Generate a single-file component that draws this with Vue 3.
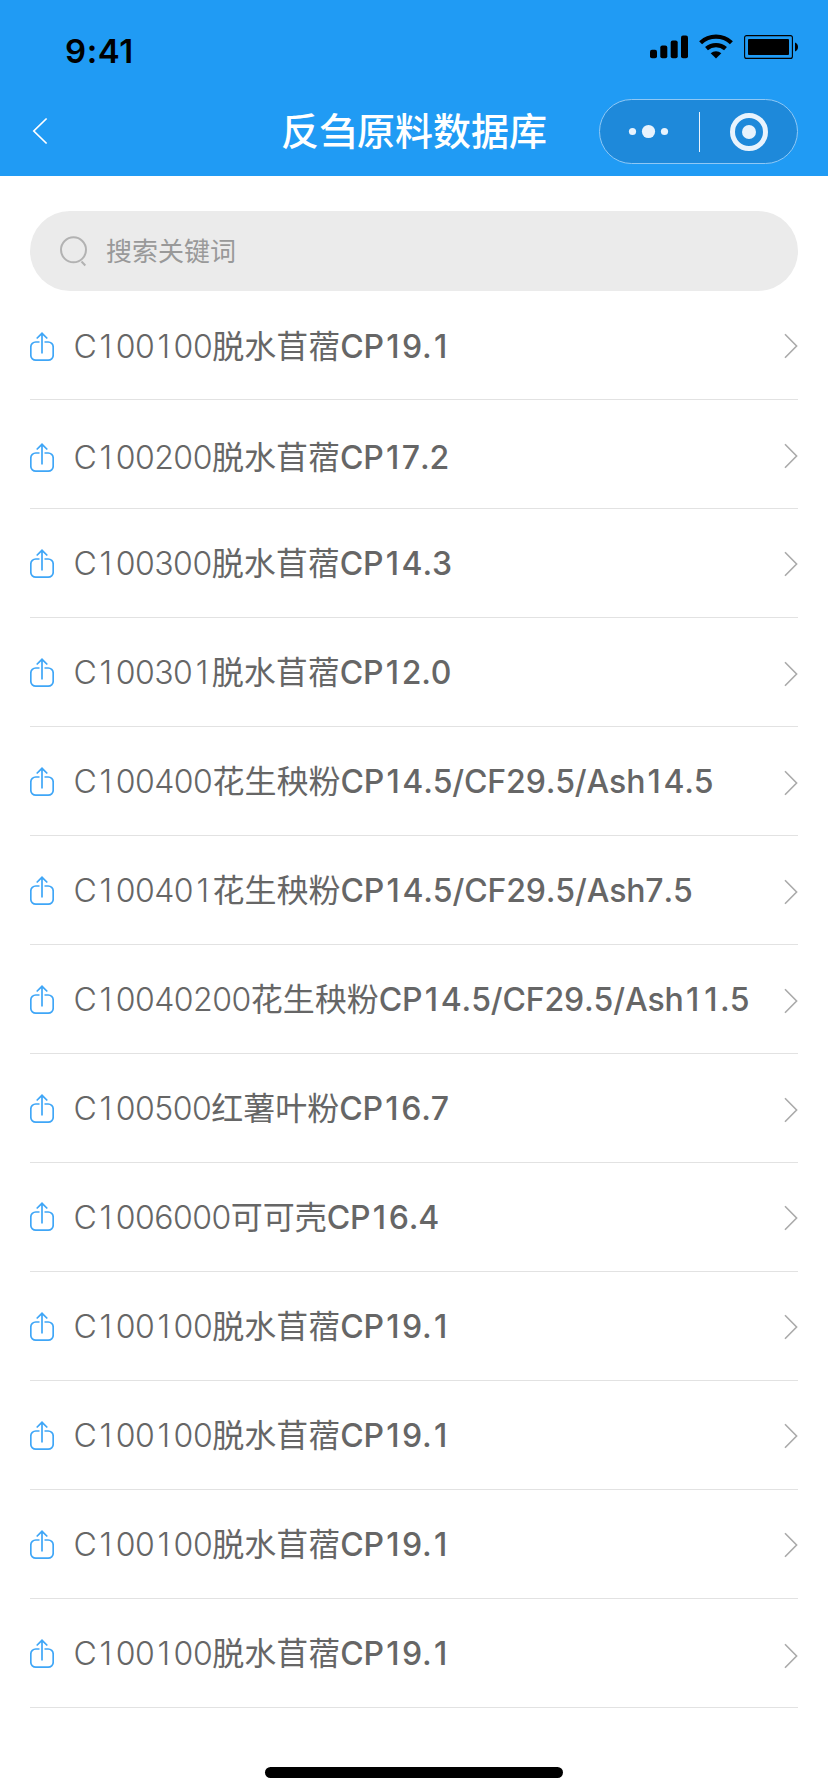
<script setup>
const rows = [
  ['C100100', '脱水苜蓿', 'CP19.1'],
  ['C100200', '脱水苜蓿', 'CP17.2'],
  ['C100300', '脱水苜蓿', 'CP14.3'],
  ['C100301', '脱水苜蓿', 'CP12.0'],
  ['C100400', '花生秧粉', 'CP14.5/CF29.5/Ash14.5'],
  ['C100401', '花生秧粉', 'CP14.5/CF29.5/Ash7.5'],
  ['C10040200', '花生秧粉', 'CP14.5/CF29.5/Ash11.5'],
  ['C100500', '红薯叶粉', 'CP16.7'],
  ['C1006000', '可可壳', 'CP16.4'],
  ['C100100', '脱水苜蓿', 'CP19.1'],
  ['C100100', '脱水苜蓿', 'CP19.1'],
  ['C100100', '脱水苜蓿', 'CP19.1'],
  ['C100100', '脱水苜蓿', 'CP19.1'],
]

// The narrow "1" is padded to the width of the other digits.
const parts = (text) => text.split(/(1)/).filter(Boolean)
</script>

<template>
  <div class="screen">
    <header class="header">
      <div class="status">
        <span class="time">9:41</span>
        <svg class="signals" width="150" height="26" viewBox="0 0 150 26">
          <rect x="0" y="15.8" width="7" height="8.5" rx="2" />
          <rect x="10.3" y="11.6" width="7" height="12.7" rx="2" />
          <rect x="20.7" y="6.6" width="7" height="17.7" rx="2" />
          <rect x="31" y="1.6" width="7" height="22.7" rx="2" />
          <g fill="none" stroke="#000" stroke-width="4.3">
            <path d="M50.6 8.7a22.6 22.6 0 0 1 30.8 0" />
            <path d="M56.5 14.7a14.4 14.4 0 0 1 19 0" />
          </g>
          <path d="M60.7 19.2a8.4 8.4 0 0 1 10.6 0L66 24.4z" />
          <rect x="94.6" y="1.6" width="47.8" height="22.8" rx="2" fill="none" stroke="#000" stroke-width="1.1" />
          <rect x="98" y="5" width="41" height="16" rx="1" />
          <path d="M145 8.5c4 1.5 4 7.5 0 9z" />
        </svg>
      </div>
      <div class="nav">
        <svg class="back" width="16" height="28" viewBox="0 0 16 28">
          <path d="M14.6 1.5L1.8 14l12.8 12.5" fill="none" stroke="#fff" stroke-width="1.7" />
        </svg>
        <h1 class="title">反刍原料数据库</h1>
        <div class="capsule">
          <svg width="199" height="65" viewBox="0 0 199 65">
            <rect x=".5" y=".5" width="198" height="64" rx="32" fill="#1e89da" stroke="#8fc8f5" />
            <g fill="#e8f3fd">
              <circle cx="33.5" cy="32.5" r="3.6" />
              <circle cx="49.5" cy="32.5" r="6.6" />
              <circle cx="65.5" cy="32.5" r="3.6" />
              <rect x="100" y="13" width="1" height="40" />
              <circle cx="150" cy="33" r="7" />
            </g>
            <circle cx="150" cy="33" r="16.5" fill="none" stroke="#e8f3fd" stroke-width="5" />
          </svg>
        </div>
      </div>
    </header>
    <div class="search">
      <svg width="28" height="32" viewBox="0 0 28 32" fill="none" stroke="#b2b2b2" stroke-width="2">
        <circle cx="13.5" cy="14.8" r="12.5" />
        <path d="M21.5 26.5l3.8 4" />
      </svg>
      <span>搜索关键词</span>
    </div>
    <ul class="list">
      <li v-for="(r, i) in rows" :key="i" class="row">
        <svg class="share" width="24" height="30" viewBox="0 0 24 30" fill="none" stroke="#3fa6f7" stroke-width="1.7">
          <path d="M9.5 10H6a5 5 0 0 0-5.2 5v8.2a5 5 0 0 0 5.2 5h12a5 5 0 0 0 5.2-5V15a5 5 0 0 0-5.2-5h-3.5" />
          <path d="M12 21.5V1.5M6.7 6.5L12 1.3l5.3 5.2" />
        </svg>
        <p class="label"><span class="code"><span v-for="(p, k) in parts(r[0])" :key="k" :class="{ one: p === '1' }">{{ p }}</span></span><span class="name">{{ r[1] }}</span><b class="spec"><span v-for="(p, k) in parts(r[2])" :key="k" :class="{ one: p === '1' }">{{ p }}</span></b></p>
        <svg class="chevron" width="14" height="26" viewBox="0 0 14 26">
          <path d="M1 1.2L12.6 13 1 24.8" fill="none" stroke="#aaa" stroke-width="1.6" />
        </svg>
      </li>
    </ul>
    <div class="home"></div>
  </div>
</template>

<style>
body { margin: 0; background: #fff; }
</style>

<style scoped>
.screen { width: 828px; height: 1792px; background: #fff; display: flex; flex-direction: column; overflow: hidden; font-family: Inter, "Noto Sans CJK SC", sans-serif; }
.header { height: 176px; background: #209bf4; flex: none; }
.status { height: 98px; display: flex; justify-content: space-between; box-sizing: border-box; padding: 34px 28px 0 65px; }
.time { font-size: 33px; line-height: 34px; font-weight: 600; letter-spacing: 0.6px; color: #000; }
.nav { height: 66px; display: flex; align-items: center; padding: 0 30px 0 32px; }
.title { margin: 0 0 0 233px; font-size: 38px; line-height: 66px; font-weight: 500; color: #fff; white-space: nowrap; }
.capsule { margin-left: auto; height: 65px; }
.capsule svg, .share, .chevron, .back { display: block; flex: none; }
.search { flex: none; margin: 35px 30px 0; height: 80px; border-radius: 40px; background: #ebebeb; display: flex; align-items: center; gap: 18px; padding-left: 30px; box-sizing: border-box; font-size: 26px; font-weight: 400; color: #999; }
.search span { padding-bottom: 3px; }
.list { list-style: none; margin: 0 30px; padding: 0; flex: none; }
.row { --shift: 1px; --icon: 1px; --chev: 2px; height: 109px; box-sizing: border-box; border-bottom: 1px solid #e2e2e2; display: flex; align-items: center; }
.row:nth-child(1) { --shift: 2px; --icon: 2px; --chev: 1px; }
.row:nth-child(2) { --shift: 4px; --icon: 4px; }
.row:nth-child(3), .row:nth-child(n + 9) { --chev: 1px; }
.row:nth-child(9) { --icon: 0px; }
.row:nth-child(13) { --chev: 3px; }
.share { transform: translateY(var(--icon)); }
.label { transform: translateY(var(--shift)); margin: 0 0 0 19.5px; font-size: 32px; line-height: 48px; color: #666; white-space: nowrap; font-kerning: none; font-feature-settings: "calt" 0; }
.chevron { margin-left: auto; transform: translateY(var(--chev)); }
.code { font-weight: 350; letter-spacing: -0.5px; }
.code .one { padding: 0 4px 0 3.3px; }
.name { font-weight: 400; }
.spec { font-weight: 500; letter-spacing: -0.15px; }
.spec .one { padding: 0 2.8px 0 2.3px; }
.home { margin: 59px auto 0; width: 298px; height: 11px; border-radius: 6px; background: #000; flex: none; }
</style>
